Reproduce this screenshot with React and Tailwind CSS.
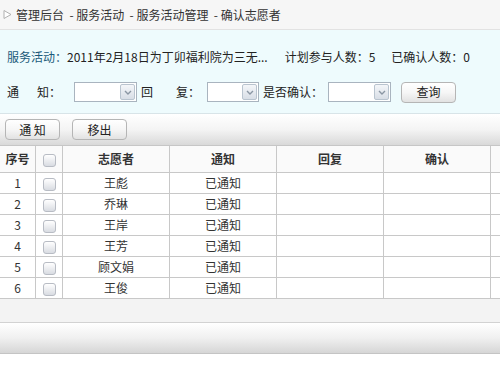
import React from 'react';

const rows = [
  { id: 1, name: '王彪' },
  { id: 2, name: '乔琳' },
  { id: 3, name: '王岸' },
  { id: 4, name: '王芳' },
  { id: 5, name: '顾文娟' },
  { id: 6, name: '王俊' },
];

function Check() {
  return (
    <span className="inline-block w-[13px] h-[13px] rounded-[3px] border border-[#b8bcc4] bg-gradient-to-b from-[#ffffff] to-[#d9dce2] align-middle" />
  );
}

function Select({ w }) {
  return (
    <div
      className="h-[20px] border border-[#a9b4bf] bg-white flex justify-end items-center pr-[1px]"
      style={{ width: w }}
    >
      <div className="w-[15px] h-[16px] rounded-[2px] border border-[#b9c4cf] bg-gradient-to-b from-[#f4f6f9] to-[#d8dee6] flex items-center justify-center">
        <svg width="8" height="5" viewBox="0 0 8 5">
          <path d="M1 1 L4 4 L7 1" fill="none" stroke="#8a96a3" strokeWidth="1.4" />
        </svg>
      </div>
    </div>
  );
}

function Btn({ children, w }) {
  return (
    <button
      className="h-[21px] rounded-[4px] border border-[#b5b5b5] bg-gradient-to-b from-[#ffffff] via-[#f6f6f6] to-[#e2e2e2] text-[12px] text-[#222] leading-none"
      style={{ width: w }}
    >
      {children}
    </button>
  );
}

export default function App() {
  const cell = 'border border-[#c8c8c8] text-center text-[12px] text-[#333] h-[21px] p-0';
  return (
    <div className="w-[500px] h-[377px] bg-white overflow-hidden font-['Noto_Sans_CJK_SC','Noto_Sans',sans-serif]">
      {/* Breadcrumb */}
      <div className="h-[30px] bg-[#f6f6f6] border-b border-[#e2e2e2] flex items-center pl-[3px] text-[12px] text-[#333]">
        <svg width="9" height="9" viewBox="0 0 9 9" className="mr-[4px]">
          <path d="M1 0.5 L8 4.5 L1 8.5 Z" fill="#fff" stroke="#b0b0b0" />
        </svg>
        <span className="whitespace-pre">管理后台  - 服务活动  - 服务活动管理  - 确认志愿者</span>
      </div>

      {/* Filter area */}
      <div className="h-[84px] bg-[#eefbfd] border-b border-[#d8e4e8] pt-[17px] pl-[7px] text-[12px] text-[#222]">
        <div className="flex items-center h-[20px]">
          <span className="text-[#1a5a7a]">服务活动：</span>
          <span>2011年2月18日为丁卯福利院为三无...</span>
          <span className="ml-[17px]">计划参与人数：5</span>
          <span className="ml-[16px]">已确认人数：0</span>
        </div>
        <div className="flex items-center mt-[14px] h-[22px]">
          <span className="w-[67px]">通&emsp;&ensp;知：</span>
          <Select w={63} />
          <span className="ml-[4px] w-[35px]">回</span>
          <span className="w-[31px]">复：</span>
          <Select w={52} />
          <span className="ml-[4px] w-[65px]">是否确认：</span>
          <Select w={63} />
          <span className="ml-[10px]">
            <Btn w={55}>查询</Btn>
          </span>
        </div>
      </div>

      {/* Toolbar */}
      <div className="h-[32px] bg-gradient-to-b from-[#ffffff] via-[#f4f4f4] to-[#d9d9d9] border-b border-[#c6c6c6] flex items-center pl-[5px] gap-[12px]">
        <Btn w={55}>通&nbsp;知</Btn>
        <Btn w={55}>移出</Btn>
      </div>

      {/* Table */}
      <table className="border-collapse table-fixed w-[510px] -ml-[1px]">
        <colgroup>
          <col className="w-[36px]" />
          <col className="w-[27px]" />
          <col className="w-[107px]" />
          <col className="w-[107px]" />
          <col className="w-[107px]" />
          <col className="w-[107px]" />
          <col className="w-[19px]" />
        </colgroup>
        <thead>
          <tr className="bg-[#fafafa]">
            <th className={cell + ' h-[26px] font-bold border-t-0'}>序号</th>
            <th className={cell + ' h-[26px] border-t-0'}><Check /></th>
            <th className={cell + ' h-[26px] font-bold border-t-0'}>志愿者</th>
            <th className={cell + ' h-[26px] font-bold border-t-0'}>通知</th>
            <th className={cell + ' h-[26px] font-bold border-t-0'}>回复</th>
            <th className={cell + ' h-[26px] font-bold border-t-0'}>确认</th>
            <th className={cell + ' h-[26px] border-t-0'} />
          </tr>
        </thead>
        <tbody>
          {rows.map(r => (
            <tr key={r.id} className="bg-white">
              <td className={cell}>{r.id}</td>
              <td className={cell}><Check /></td>
              <td className={cell}>{r.name}</td>
              <td className={cell}>已通知</td>
              <td className={cell} />
              <td className={cell} />
              <td className={cell} />
            </tr>
          ))}
        </tbody>
      </table>

      {/* Footer */}
      <div className="h-[24px] bg-[#f3f3f3] border-b border-[#d2d2d2]" />
      <div className="h-[31px] bg-gradient-to-b from-[#ffffff] via-[#f0f0f0] to-[#d6d6d6] border-b border-[#c4c4c4]" />
    </div>
  );
}
